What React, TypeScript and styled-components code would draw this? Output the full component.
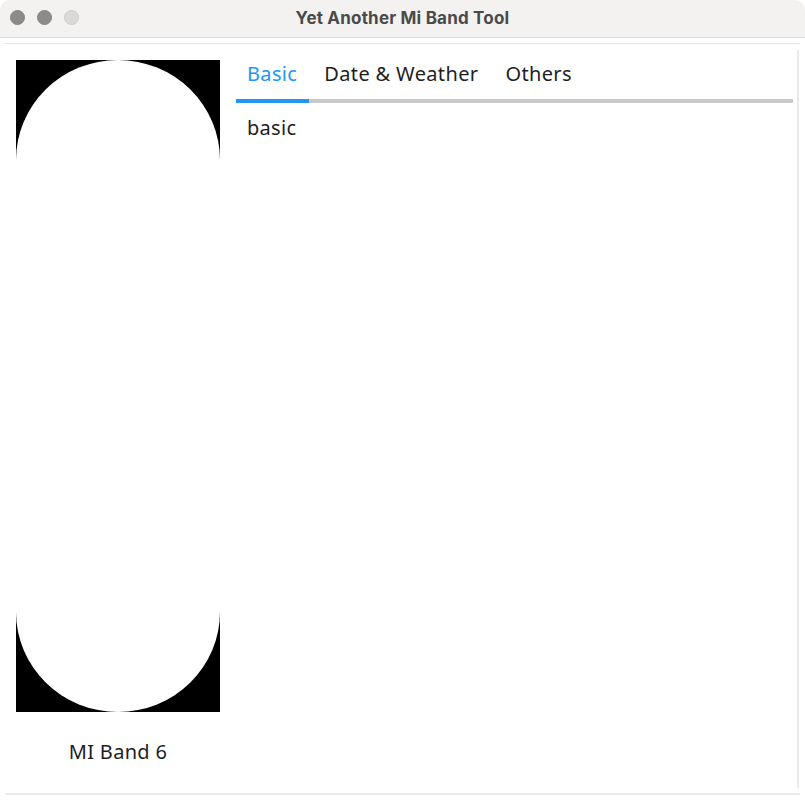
import styled, { createGlobalStyle } from 'styled-components';

const GlobalStyle = createGlobalStyle`
    html, body {
        margin: 0;
        padding: 0;
        background: #ffffff;
    }
    * {
        box-sizing: border-box;
    }
`;

const tabs = ['Basic', 'Date & Weather', 'Others'];

export default function App() {
    return (
        <>
            <GlobalStyle />
            <Window>
                <TitleBar>
                    <Lights>
                        <Light />
                        <Light />
                        <Light $off />
                    </Lights>
                    <Title>Yet Another Mi Band Tool</Title>
                </TitleBar>
                <Frame>
                    <Sidebar>
                        <BandScreen>
                            <BandFace />
                        </BandScreen>
                        <BandName>MI Band 6</BandName>
                    </Sidebar>
                    <Main>
                        <TabBar>
                            {tabs.map((t, i) => (
                                <Tab key={t} $active={i === 0}>
                                    {t}
                                </Tab>
                            ))}
                        </TabBar>
                        <TabPanel>basic</TabPanel>
                    </Main>
                    <ScrollTrack />
                </Frame>
            </Window>
        </>
    );
}

const Window = styled.div`
    width: 805px;
    height: 800px;
    display: flex;
    flex-direction: column;
    background: #ffffff;
    font-family: 'Noto Sans', 'Lato', sans-serif;
    color: #1e1e1e;
`;

const TitleBar = styled.div`
    position: relative;
    height: 38px;
    flex-shrink: 0;
    display: flex;
    align-items: center;
    justify-content: center;
    background: #f3f2f0;
    border-bottom: 1px solid #dddcda;
    border-radius: 10px 10px 0 0;
`;

const Lights = styled.div`
    position: absolute;
    left: 10px;
    top: 10px;
    display: flex;
    gap: 12px;
`;

const Light = styled.span<{ $off?: boolean }>`
    width: 15px;
    height: 15px;
    flex-shrink: 0;
    border-radius: 50%;
    background: ${(p) => (p.$off ? '#dadada' : '#8b8b8b')};
    border: 1px solid ${(p) => (p.$off ? '#cdcdcd' : '#838383')};
`;

const Title = styled.div`
    font-family: 'Inter', 'Liberation Sans', sans-serif;
    font-weight: 700;
    font-size: 17px;
    line-height: 20px;
    margin-top: -2px;
    color: #4a4a4a;
    letter-spacing: 0.2px;
`;

const Frame = styled.div`
    margin: 5px 5px 5px 5px;
    flex: 1;
    display: flex;
    border-top: 1px solid #e3e3e3;
    border-bottom: 2px solid #ebebeb;
`;

const Sidebar = styled.div`
    width: 229px;
    flex-shrink: 0;
    padding: 16px 0 0 11px;
    display: flex;
    flex-direction: column;
    align-items: flex-start;
`;

const BandScreen = styled.div`
    width: 204px;
    height: 652px;
    background: #000000;
`;

const BandFace = styled.div`
    width: 100%;
    height: 100%;
    background: #ffffff;
    border-radius: 102px / 100px;
`;

const BandName = styled.div`
    width: 204px;
    margin-top: 26px;
    text-align: center;
    font-size: 20px;
    line-height: 28px;
    letter-spacing: 0.3px;
`;

const Main = styled.div`
    flex: 1;
    padding-top: 16px;
    display: flex;
    flex-direction: column;
`;

const TabBar = styled.div`
    display: flex;
    border-bottom: 4px solid #c9c9c9;
    margin-left: 2px;
`;

const Tab = styled.div<{ $active?: boolean }>`
    padding: 0 12px 11px 11px;
    font-size: 20px;
    line-height: 28px;
    letter-spacing: 0.35px;
    color: ${(p) => (p.$active ? '#2196f3' : '#1e1e1e')};
    margin-bottom: -4px;
    border-bottom: 4px solid ${(p) => (p.$active ? '#2196f3' : 'transparent')};

    & + & {
        padding-left: 15px;
    }
`;

const TabPanel = styled.div`
    padding: 11px 0 0 13px;
    font-size: 20px;
    line-height: 28px;
    letter-spacing: 0.3px;
`;

const ScrollTrack = styled.div`
    width: 2px;
    margin: 6px 1px 5px 4px;
    background: #e9e9e9;
`;
